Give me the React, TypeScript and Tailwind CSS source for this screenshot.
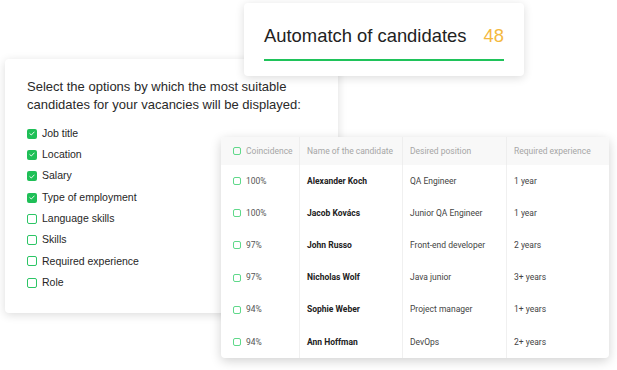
import React from "react";

const options = [
  { label: "Job title", checked: true },
  { label: "Location", checked: true },
  { label: "Salary", checked: true },
  { label: "Type of employment", checked: true },
  { label: "Language skills", checked: false },
  { label: "Skills", checked: false },
  { label: "Required experience", checked: false },
  { label: "Role", checked: false },
];

const rows = [
  ["100%", "Alexander Koch", "QA Engineer", "1 year"],
  ["100%", "Jacob Kovács", "Junior QA Engineer", "1 year"],
  ["97%", "John Russo", "Front-end developer", "2 years"],
  ["97%", "Nicholas Wolf", "Java junior", "3+ years"],
  ["94%", "Sophie Weber", "Project manager", "1+ years"],
  ["94%", "Ann Hoffman", "DevOps", "2+ years"],
];

function Check({ checked }: { checked: boolean }) {
  if (checked) {
    return (
      <span className="w-[10px] h-[10px] rounded-[2px] bg-[#1fbf57] flex items-center justify-center shrink-0">
        <svg width="6" height="5" viewBox="0 0 6 5" fill="none">
          <path d="M0.8 2.6 L2.3 4 L5.2 1" stroke="white" strokeWidth="0.9" strokeLinecap="round" strokeLinejoin="round" />
        </svg>
      </span>
    );
  }
  return <span className="w-[10px] h-[10px] rounded-[2px] border-[1.3px] border-[#2cc565] shrink-0" />;
}

function SmallBox() {
  return <span className="w-[8px] h-[8px] rounded-[2px] border border-[#5fd98a] shrink-0" />;
}

export default function App() {
  return (
    <div className="relative w-[617px] h-[370px] bg-white overflow-hidden font-['Liberation_Sans',Arial,sans-serif]">
      {/* ===== OPTIONS CARD ===== */}
      <div className="absolute left-[5px] top-[59px] w-[333px] h-[254px] bg-white rounded-[4px] shadow-[0_2px_10px_rgba(0,0,0,0.14)] pl-[22px] pt-[19px]">
        <p className="text-[13px] leading-[18px] text-[#2a2a2a] mb-[9px]">
          Select the options by which the most suitable
          <br />
          candidates for your vacancies will be displayed:
        </p>
        <div className="flex flex-col">
          {options.map((o) => (
            <div key={o.label} className="flex items-center gap-[5px] h-[21.3px]">
              <Check checked={o.checked} />
              <span className="text-[10.5px] text-[#262626]">{o.label}</span>
            </div>
          ))}
        </div>
      </div>

      {/* ===== TOP CARD ===== */}
      <div className="absolute left-[244px] top-[3px] w-[280px] h-[73px] bg-white rounded-[4px] shadow-[0_2px_10px_rgba(0,0,0,0.14)] px-[20px] pt-[22px]">
        <div className="flex items-center justify-between text-[18.4px] leading-[22px]">
          <span className="text-[#222]">Automatch of candidates</span>
          <span className="text-[#f4b840]">48</span>
        </div>
        <div className="mt-[12px] h-[2px] bg-[#1fc35a]" />
      </div>

      {/* ===== TABLE CARD ===== */}
      <div className="absolute left-[221px] top-[137px] w-[388px] h-[221px] bg-white rounded-[4px] shadow-[0_3px_11px_rgba(0,0,0,0.18)] overflow-hidden font-['Roboto',Arial,sans-serif]">
        <div className="grid grid-cols-[78px_103px_104px_103px] h-[28px] bg-[#f8f8f8] text-[8.5px] text-[#a6a6a6]">
          <div className="flex items-center gap-[5px] pl-[12px]">
            <SmallBox />
            Coincidence
          </div>
          <div className="flex items-center pl-[7px] border-l border-[#eeeeee]">Name of the candidate</div>
          <div className="flex items-center pl-[7px] border-l border-[#eeeeee]">Desired position</div>
          <div className="flex items-center pl-[7px] border-l border-[#eeeeee]">Required experience</div>
        </div>
        {rows.map((r) => (
          <div key={r[1]} className="grid grid-cols-[78px_103px_104px_103px] h-[32.2px] text-[8.5px]">
            <div className="flex items-center gap-[5px] pl-[12px] text-[#555]">
              <SmallBox />
              {r[0]}
            </div>
            <div className="flex items-center pl-[7px] border-l border-[#f0f0f0] font-bold text-[#222]">{r[1]}</div>
            <div className="flex items-center pl-[7px] border-l border-[#f0f0f0] text-[#444]">{r[2]}</div>
            <div className="flex items-center pl-[7px] border-l border-[#f0f0f0] text-[#444]">{r[3]}</div>
          </div>
        ))}
      </div>
    </div>
  );
}
